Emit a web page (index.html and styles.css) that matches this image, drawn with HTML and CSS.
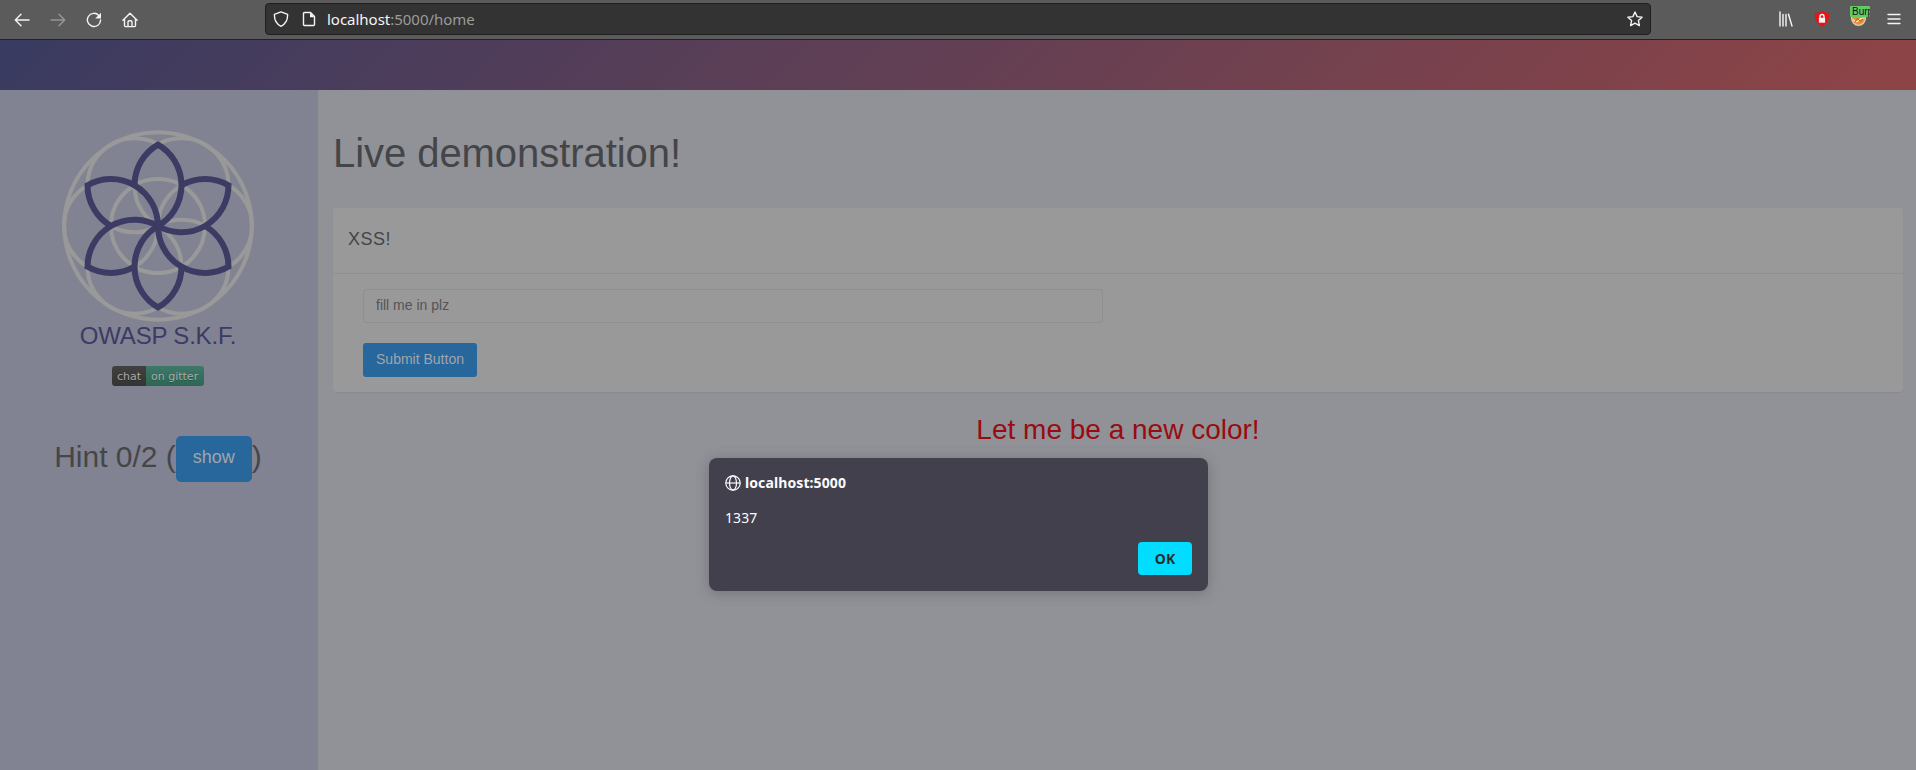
FILE: index.html
```html
<!DOCTYPE html>
<html lang="en">
<head>
<meta charset="utf-8">
<title>Live demonstration</title>
<link rel="stylesheet" href="styles.css">
</head>
<body>
<header class="toolbar">
  <div class="nav-icons">
    <svg class="icon" viewBox="0 0 16 16"><path d="M15 8H1.5M7 2.2 1.3 8 7 13.8"/></svg>
    <svg class="icon icon-dim" viewBox="0 0 16 16"><path d="M1 8h13.5M9 2.2 14.7 8 9 13.8"/></svg>
    <svg class="icon" viewBox="0 0 16 16"><path d="M12.8 3.4A6.6 6.6 0 1 0 14.6 8"/><path class="solid" d="M15 .8v5.8H9.2z"/></svg>
    <svg class="icon icon-home" viewBox="0 0 16 16"><path d="M.9 8.2 8 1.2l7.1 7M2.5 7v6.6q0 1 1 1h9q1 0 1-1V7M6 14.5V10q0-1.2 1.2-1.2h1.6Q10 8.800 10 10v4.500"/></svg>
  </div>
  <div class="urlbar">
    <svg class="icon" viewBox="0 0 16 16"><path d="M8 .9 14.6 3.300C14.800 8.500 13 13 8 15.300 3 13 1.200 8.500 1.400 3.300z"/></svg>
    <svg class="icon icon-page" viewBox="0 0 16 16"><path d="M3.500 1.500h6l4 4v8q0 1-1 1h-9q-1 0-1-1v-11q0-1 1-1z"/><path class="solid" d="M9 1.500v4.700h4.500z"/></svg>
    <span class="url">localhost<span class="url-rest">:5000/home</span></span>
    <svg class="icon icon-star" viewBox="0 0 16 16"><path d="m8 1 2.100 4.600 5 .6-3.700 3.400 1 5L8 12.100l-4.400 2.500 1-5L.9 6.200l5-.6z"/></svg>
  </div>
  <div class="ext-icons">
    <svg class="icon" viewBox="0 0 16 16"><path d="M2 1v14M5 3.500V15M8 3.500V15M10.500 3.200 14 15"/></svg>
    <svg class="icon ext-lock" viewBox="0 0 16 16"><path class="red" d="M8 0q3.500 2 7.200 2.200.3 9.800-7.200 13.600Q.5 12 .8 2.200 4.500 2 8 0z"/><path d="M6 7V5.500a2 2 0 0 1 4 0V7"/><path class="solid" d="M4.900 6.800h6.200v4.900H4.900z"/></svg>
    <div class="burp">
      <svg viewBox="0 0 18 18"><circle cx="9" cy="9" r="8" fill="#d8c9b4"/><circle cx="9" cy="9" r="6.500" fill="#ee9030"/><path d="M3 10q3 4 6 1t6-2" stroke="#f8dfb8" stroke-width="1.500" fill="none"/><path d="m5 13 3-4 3 3 3-3" stroke="#a65a20" fill="none"/></svg>
      <span class="burp-tag">Burp</span>
    </div>
    <svg class="icon" viewBox="0 0 16 16"><path d="M2 3.500h12M2 8h12M2 12.500h12"/></svg>
  </div>
</header>
<div class="banner"></div>
<div class="page">
  <aside class="sidebar">
    <svg class="logo" viewBox="-96 -96 192 192">
      <defs><path id="petal" d="M0 0A47 47 0 0 0 0-81.400 47 47 0 0 0-23.500-40.700"/></defs>
      <g class="rings">
        <circle r="93.800"/><circle r="47"/>
        <circle cx="47" r="47"/><circle cx="-47" r="47"/>
        <circle cx="23.500" cy="-40.700" r="47"/><circle cx="-23.500" cy="-40.700" r="47"/>
        <circle cx="23.500" cy="40.700" r="47"/><circle cx="-23.500" cy="40.700" r="47"/>
      </g>
      <g class="petals">
        <use href="#petal"/><use href="#petal" transform="rotate(60)"/><use href="#petal" transform="rotate(120)"/>
        <use href="#petal" transform="rotate(180)"/><use href="#petal" transform="rotate(240)"/><use href="#petal" transform="rotate(300)"/>
      </g>
    </svg>
    <div class="brand">OWASP S.K.F.</div>
    <div class="badge"><span class="badge-l">chat</span><span class="badge-r">on gitter</span></div>
    <div class="hint"><span>Hint 0/2 (</span><button class="btn btn-lg">show</button><span>)</span></div>
  </aside>
  <main class="content">
    <h1>Live demonstration!</h1>
    <section class="card">
      <div class="card-head">XSS!</div>
      <div class="card-body">
        <div class="field">fill me in plz</div>
        <button class="btn">Submit Button</button>
      </div>
    </section>
    <p class="colored">Let me be a new color!</p>
  </main>
</div>
<div class="dialog">
  <div class="dialog-title">
    <svg class="globe" viewBox="0 0 16 16"><circle cx="8" cy="8" r="7.200"/><ellipse cx="8" cy="8" rx="3.500" ry="7.200"/><path d="M.8 8h14.400"/></svg>
    <span>localhost:5000</span>
  </div>
  <div class="dialog-text">1337</div>
  <button class="ok">OK</button>
</div>
</body>
</html>
```
FILE: styles.css
```css
* { box-sizing: border-box; }
body { margin: 0; height: 770px; overflow: hidden; display: flex; flex-direction: column; font-family: "Liberation Sans", Arial, sans-serif; background: #919297; }
button { border: 0; font-family: inherit; }

.toolbar { height: 40px; flex: none; display: flex; align-items: flex-start; background: #5b5b5b; border-bottom: 1px solid #222; }
.icon { width: 16px; height: 16px; flex: none; fill: none; stroke: #f4f4f4; stroke-width: 1.4; stroke-linejoin: round; stroke-linecap: round; }
.icon .solid { fill: #f4f4f4; stroke: none; }
.icon-dim { stroke: #979797; }
.nav-icons { width: 265px; flex: none; display: flex; gap: 20px; padding: 12px 0 0 14px; }
.icon-home { margin-left: -.5px; }
.urlbar { width: 1386px; height: 32px; margin-top: 3px; flex: none; display: flex; align-items: center; padding: 0 7px; background: #333; border: 1px solid #1f1f1f; border-radius: 4px; }
.icon-page { margin-left: 12px; }
.url { margin-left: 10px; font: 15px/20px "Noto Sans", sans-serif; letter-spacing: -.02px; color: #f6f6f6; }
.url-rest { color: #9b9b9b; }
.icon-star { margin-left: auto; }
.ext-icons { flex: 1; display: flex; gap: 20px; padding: 11px 0 0 127px; }
.ext-lock .red { fill: #ea1212; stroke: none; }
.burp { position: relative; width: 20px; height: 18px; flex: none; margin-right: -4px; }
.burp svg { display: block; width: 17px; height: 17px; margin-top: -1px; }
.burp-tag { position: absolute; left: 0; top: -5px; width: 20px; height: 11px; overflow: hidden; padding-left: 2px; background: #63c967; border-radius: 1px; font-size: 10px; line-height: 11px; color: #111; }

.banner { height: 50px; flex: none; background: linear-gradient(135deg, #393b61, #8e4446); }
.page { flex: 1; display: flex; }
.sidebar { width: 318px; flex: none; display: flex; flex-direction: column; align-items: center; padding: 40px 2px 0 0; background: #818292; }
.logo { width: 192px; height: 192px; flex: none; }
.rings { fill: none; stroke: #999; stroke-width: 4; }
.petals { fill: none; stroke: #3b3b64; stroke-width: 6; stroke-linejoin: miter; }
.brand { font-size: 24px; line-height: 28px; color: #3b3b64; letter-spacing: -.2px; }
.badge { margin-top: 16px; display: flex; height: 20px; width: 92px; border-radius: 3px; overflow: hidden; font: 11px/21px "DejaVu Sans", sans-serif; color: #aaa; text-shadow: 0 1px 0 #0004; }
.badge-l { width: 34px; padding-left: 5px; background: linear-gradient(#414141, #343434); }
.badge-r { flex: 1; padding-left: 5px; background: linear-gradient(#3d7969, #2d6654); white-space: nowrap; }
.hint { margin-top: 50px; display: flex; align-items: flex-start; font-size: 30px; line-height: 42px; color: #454648; }
.btn { display: flex; justify-content: center; align-items: flex-start; height: 34px; padding: 0; border-radius: 3px; background: #28679c; color: #a0a5ab; font-size: 14px; line-height: 32px; }
.btn-lg { width: 76px; height: 46px; border-radius: 5px; font-size: 18px; line-height: 42px; }

.content { flex: 1; padding: 38px 13px 0 15px; box-shadow: inset 8px 0 6px -6px #9493966b; }
h1 { margin: 0; font-size: 40px; line-height: 50px; font-weight: 400; letter-spacing: -.06px; color: #444549; }
.card { height: 184px; margin-top: 30px; background: #99999a; border-radius: 3px; box-shadow: 0 1px 1px #8a8b90; }
.card-head { height: 66px; padding: 19px 15px 0; border-bottom: 1px solid #8f8f90; font-size: 18px; line-height: 24px; letter-spacing: .5px; color: #444549; }
.card-body { padding: 15px 30px; }
.field { width: 740px; height: 34px; padding: 0 12px; border: 1px solid #8f8f91; border-radius: 4px; font-size: 14px; line-height: 31px; color: #555; }
.card-body .btn { margin-top: 20px; width: 114px; }
.colored { margin: 22px 0 0; font-size: 28px; line-height: 32px; text-align: center; color: #990b10; }

.dialog { position: absolute; left: 709px; top: 458px; width: 499px; height: 133px; padding: 16px; display: flex; flex-direction: column; background: #42404d; border-radius: 8px; box-shadow: 0 2px 14px #3a394455; color: #fbfbfe; font: 14px/18px "Noto Sans", sans-serif; }
.dialog-title { display: flex; align-items: center; gap: 4px; font-weight: 700; letter-spacing: .1px; }
.globe { width: 16px; height: 16px; fill: none; stroke: #fbfbfe; stroke-width: 1.200; }
.dialog-text { margin-top: 17px; letter-spacing: .1px; }
.ok { margin: 15px 0 0 auto; width: 54px; height: 33px; flex: none; border-radius: 4px; background: #00ddff; color: #2b2a33; font-weight: 700; font-size: 14px; }
```
